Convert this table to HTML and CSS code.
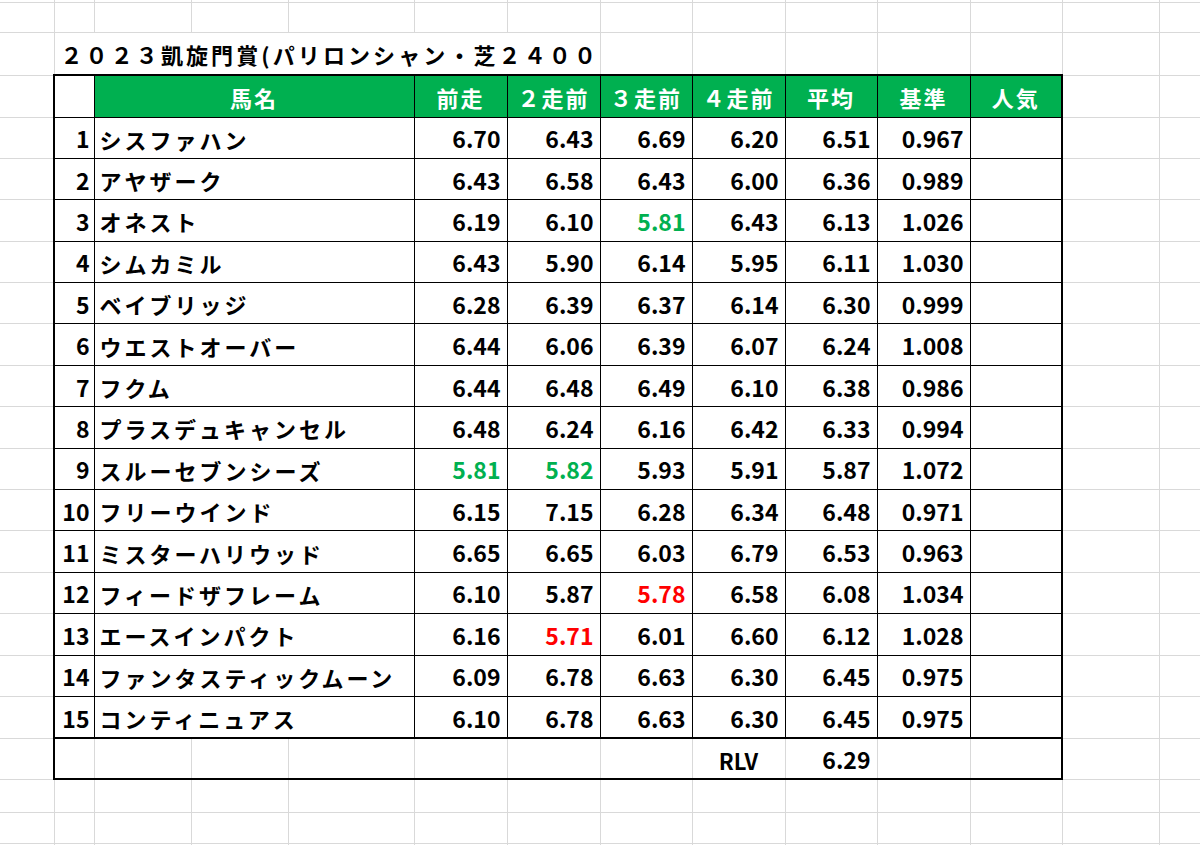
FILE: index.html
```html
<!DOCTYPE html>
<html lang="ja">
<head>
<meta charset="utf-8">
<title>2023凱旋門賞</title>
<link rel="stylesheet" href="styles.css">
</head>
<body>
<table class="sheet">
<colgroup>
<col class="w54"><col class="w40"><col class="w97"><col class="w97"><col class="w126"><col class="w93"><col class="w93"><col class="w92"><col class="w93"><col class="w92"><col class="w93"><col class="w92"><col class="w97"><col class="w60">
</colgroup>
<tbody>
<tr class="r-top"><td></td><td></td><td></td><td></td><td></td><td></td><td></td><td></td><td></td><td></td><td></td><td></td><td></td><td></td></tr>
<tr class="r-30"><td></td><td></td><td></td><td></td><td></td><td></td><td></td><td></td><td></td><td></td><td></td><td></td><td></td><td></td></tr>
<tr class="r-title"><td></td><td class="title" colspan="6">２０２３凱旋門賞(パリロンシャン・芝２４００</td><td></td><td></td><td></td><td></td><td></td><td></td><td></td></tr>
<tr class="r-head"><td></td><td class="t first top"></td><td class="t hd top" colspan="3">馬名</td><td class="t hd top">前走</td><td class="t hd top">２走前</td><td class="t hd top">３走前</td><td class="t hd top">４走前</td><td class="t hd top">平均</td><td class="t hd top">基準</td><td class="t hd top last">人気</td><td></td><td></td></tr>
<tr class="r-data"><td></td><td class="t first no">1</td><td class="t name" colspan="3">シスファハン</td><td class="t v">6.70</td><td class="t v">6.43</td><td class="t v">6.69</td><td class="t v">6.20</td><td class="t v">6.51</td><td class="t v">0.967</td><td class="t last"></td><td></td><td></td></tr>
<tr class="r-data"><td></td><td class="t first no">2</td><td class="t name" colspan="3">アヤザーク</td><td class="t v">6.43</td><td class="t v">6.58</td><td class="t v">6.43</td><td class="t v">6.00</td><td class="t v">6.36</td><td class="t v">0.989</td><td class="t last"></td><td></td><td></td></tr>
<tr class="r-data"><td></td><td class="t first no">3</td><td class="t name" colspan="3">オネスト</td><td class="t v">6.19</td><td class="t v">6.10</td><td class="t v good">5.81</td><td class="t v">6.43</td><td class="t v">6.13</td><td class="t v">1.026</td><td class="t last"></td><td></td><td></td></tr>
<tr class="r-data"><td></td><td class="t first no">4</td><td class="t name" colspan="3">シムカミル</td><td class="t v">6.43</td><td class="t v">5.90</td><td class="t v">6.14</td><td class="t v">5.95</td><td class="t v">6.11</td><td class="t v">1.030</td><td class="t last"></td><td></td><td></td></tr>
<tr class="r-data"><td></td><td class="t first no">5</td><td class="t name" colspan="3">ベイブリッジ</td><td class="t v">6.28</td><td class="t v">6.39</td><td class="t v">6.37</td><td class="t v">6.14</td><td class="t v">6.30</td><td class="t v">0.999</td><td class="t last"></td><td></td><td></td></tr>
<tr class="r-data"><td></td><td class="t first no">6</td><td class="t name" colspan="3">ウエストオーバー</td><td class="t v">6.44</td><td class="t v">6.06</td><td class="t v">6.39</td><td class="t v">6.07</td><td class="t v">6.24</td><td class="t v">1.008</td><td class="t last"></td><td></td><td></td></tr>
<tr class="r-data"><td></td><td class="t first no">7</td><td class="t name" colspan="3">フクム</td><td class="t v">6.44</td><td class="t v">6.48</td><td class="t v">6.49</td><td class="t v">6.10</td><td class="t v">6.38</td><td class="t v">0.986</td><td class="t last"></td><td></td><td></td></tr>
<tr class="r-data"><td></td><td class="t first no">8</td><td class="t name" colspan="3">プラスデュキャンセル</td><td class="t v">6.48</td><td class="t v">6.24</td><td class="t v">6.16</td><td class="t v">6.42</td><td class="t v">6.33</td><td class="t v">0.994</td><td class="t last"></td><td></td><td></td></tr>
<tr class="r-data"><td></td><td class="t first no">9</td><td class="t name" colspan="3">スルーセブンシーズ</td><td class="t v good">5.81</td><td class="t v good">5.82</td><td class="t v">5.93</td><td class="t v">5.91</td><td class="t v">5.87</td><td class="t v">1.072</td><td class="t last"></td><td></td><td></td></tr>
<tr class="r-data"><td></td><td class="t first no">10</td><td class="t name" colspan="3">フリーウインド</td><td class="t v">6.15</td><td class="t v">7.15</td><td class="t v">6.28</td><td class="t v">6.34</td><td class="t v">6.48</td><td class="t v">0.971</td><td class="t last"></td><td></td><td></td></tr>
<tr class="r-data"><td></td><td class="t first no">11</td><td class="t name" colspan="3">ミスターハリウッド</td><td class="t v">6.65</td><td class="t v">6.65</td><td class="t v">6.03</td><td class="t v">6.79</td><td class="t v">6.53</td><td class="t v">0.963</td><td class="t last"></td><td></td><td></td></tr>
<tr class="r-data"><td></td><td class="t first no">12</td><td class="t name" colspan="3">フィードザフレーム</td><td class="t v">6.10</td><td class="t v">5.87</td><td class="t v bad">5.78</td><td class="t v">6.58</td><td class="t v">6.08</td><td class="t v">1.034</td><td class="t last"></td><td></td><td></td></tr>
<tr class="r-data"><td></td><td class="t first no">13</td><td class="t name" colspan="3">エースインパクト</td><td class="t v">6.16</td><td class="t v bad">5.71</td><td class="t v">6.01</td><td class="t v">6.60</td><td class="t v">6.12</td><td class="t v">1.028</td><td class="t last"></td><td></td><td></td></tr>
<tr class="r-data"><td></td><td class="t first no">14</td><td class="t name" colspan="3">ファンタスティックムーン</td><td class="t v">6.09</td><td class="t v">6.78</td><td class="t v">6.63</td><td class="t v">6.30</td><td class="t v">6.45</td><td class="t v">0.975</td><td class="t last"></td><td></td><td></td></tr>
<tr class="r-data"><td></td><td class="t first no">15</td><td class="t name" colspan="3">コンティニュアス</td><td class="t v">6.10</td><td class="t v">6.78</td><td class="t v">6.63</td><td class="t v">6.30</td><td class="t v">6.45</td><td class="t v">0.975</td><td class="t last"></td><td></td><td></td></tr>
<tr class="r-rlv"><td></td><td class="s first"></td><td class="s"></td><td class="s"></td><td class="s"></td><td class="s"></td><td class="s"></td><td class="s"></td><td class="s lbl">RLV</td><td class="s v">6.29</td><td class="s"></td><td class="s last"></td><td></td><td></td></tr>
<tr class="r-33"><td></td><td></td><td></td><td></td><td></td><td></td><td></td><td></td><td></td><td></td><td></td><td></td><td></td><td></td></tr>
<tr class="r-31"><td></td><td></td><td></td><td></td><td></td><td></td><td></td><td></td><td></td><td></td><td></td><td></td><td></td><td></td></tr>
<tr class="r-30"><td></td><td></td><td></td><td></td><td></td><td></td><td></td><td></td><td></td><td></td><td></td><td></td><td></td><td></td></tr>
</tbody>
</table>
</body>
</html>
```

FILE: styles.css
```css
html, body {
  margin: 0;
  padding: 0;
  background: #ffffff;
  overflow: hidden;
}

body {
  font-family: "Noto Sans CJK JP", "Noto Sans", sans-serif;
  color: #000000;
}

.sheet {
  border-collapse: collapse;
  table-layout: fixed;
  width: 1219px;
}

.w54 { width: 54px; }
.w40 { width: 40px; }
.w97 { width: 97px; }
.w126 { width: 126px; }
.w93 { width: 93px; }
.w92 { width: 92px; }
.w60 { width: 60px; }

.sheet td {
  border: 1px solid #d9d9d9;
  padding: 0;
  white-space: nowrap;
  overflow: visible;
  font-size: 22px;
  font-weight: 700;
  line-height: 1;
  vertical-align: middle;
}

.sheet tr td:first-child {
  border-left: none;
}

.sheet tr.r-top td {
  border-top: none;
  height: 2px;
}

.r-30 td { height: 29px; }
.r-title td { height: 41px; }
.r-head td { height: 39.5px; }
.r-data td { height: 38.4px; }
.r-rlv td { height: 37px; }
.r-33 td { height: 31.5px; }
.r-31 td { height: 30px; }

.title {
  padding-left: 6px !important;
  font-size: 22px;
  letter-spacing: 3.1px;
}

.sheet td.t {
  border: 1px solid #000000;
}

.sheet td.top {
  border-top: 2px solid #000000;
}

.sheet td.first {
  border-left: 2px solid #000000;
}

.sheet td.last {
  border-right: 2px solid #000000;
}

.sheet td.s {
  border-top: 2px solid #000000;
  border-bottom: 2px solid #000000;
}

.sheet td.s.first {
  border-left: 2px solid #000000;
}

.sheet td.s.last {
  border-right: 2px solid #000000;
}

.hd {
  background: #00b050;
  color: #ffffff;
  text-align: center;
  letter-spacing: 2px;
  padding-top: 1px !important;
}

.no {
  text-align: right;
  padding-right: 4px !important;
  padding-top: 2px !important;
  font-size: 23px !important;
}

.name {
  padding-left: 5px !important;
  letter-spacing: 3px;
  padding-top: 2px !important;
}

.v {
  text-align: right;
  padding-right: 6px !important;
  padding-top: 2px !important;
  font-size: 23px !important;
}

.lbl {
  text-align: center;
  padding-top: 2px !important;
}

.good { color: #00b050; }
.bad { color: #ff0000; }
```
